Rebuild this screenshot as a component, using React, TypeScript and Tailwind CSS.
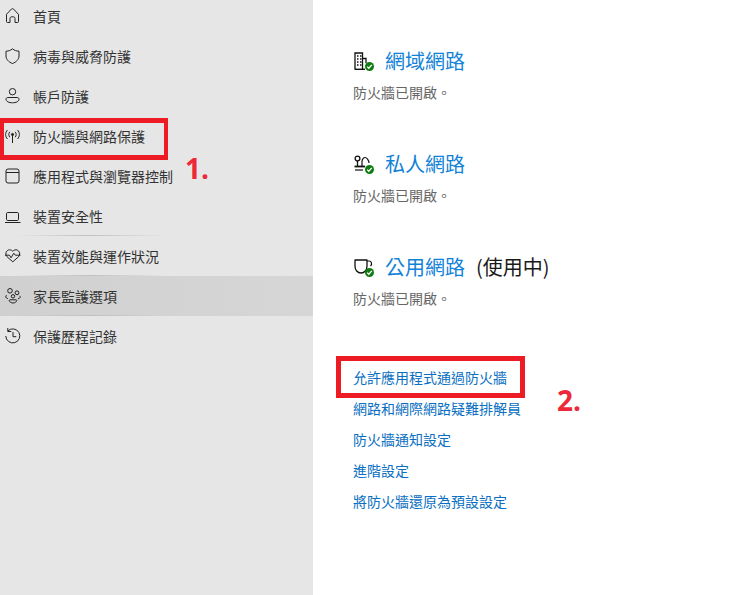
import type { ReactNode } from "react";

const font = "font-['Noto_Sans_CJK_TC','Noto_Sans_CJK_SC',sans-serif]";

function Icon({ children }: { children: ReactNode }) {
  return (
    <svg width="16" height="16" viewBox="0 0 16 16" fill="none" stroke="#222" strokeWidth="1" className="shrink-0">
      {children}
    </svg>
  );
}

const navItems: { label: string; icon: ReactNode; active?: boolean; mark?: boolean; glow?: boolean }[] = [
  {
    label: "首頁",
    icon: <path d="M1.500 6.300 6.500 1C7 .5 8 .5 8.500 1L13.500 6.300V13.500C13.500 14.200 13.200 14.500 12.500 14.500H10V10.500C10 9.500 9.300 8.800 8.500 8.800H6.500C5.700 8.800 5 9.500 5 10.500V14.500H2.500C1.800 14.500 1.500 14.200 1.500 13.500Z" strokeLinejoin="round" />,
  },
  {
    label: "病毒與威脅防護",
    icon: <path d="M7.500 .8C5.500 2.500 3.500 3.100 1 3.200V8C1 11.200 3.500 14 7.500 15.500 11.500 14 14 11.200 14 8V3.200C11.500 3.100 9.500 2.500 7.500 .8Z" />,
  },
  {
    label: "帳戶防護",
    icon: (
      <>
        <circle cx="7.500" cy="3.700" r="3.200" />
        <path d="M2.800 9.500H12.200C13.300 9.500 14 10.200 14 11.200 14 13.500 11 14.800 7.500 14.800 4 14.800 1 13.500 1 11.200 1 10.200 1.700 9.500 2.800 9.500Z" />
      </>
    ),
  },
  {
    label: "防火牆與網路保護",
    mark: true,
    icon: (
      <>
        <circle cx="7.500" cy="6.500" r="1.100" fill="#222" />
        <path d="M7.500 7V15" />
        <path d="M4.800 3.800C3.500 5.300 3.500 7.700 4.800 9.200M10.200 3.800C11.500 5.300 11.500 7.700 10.200 9.200" />
        <path d="M2.500 2C0 4.500 0 8.500 2.500 11M12.500 2C15 4.500 15 8.500 12.500 11" />
      </>
    ),
  },
  {
    label: "應用程式與瀏覽器控制",
    icon: (
      <>
        <rect x="1" y="1" width="13" height="14" rx="2" />
        <path d="M1 4.500H14" />
      </>
    ),
  },
  {
    label: "裝置安全性",
    glow: true,
    icon: (
      <>
        <rect x="1.500" y="4.500" width="12" height="8" rx="1.200" />
        <path d="M0 14.500H15.500" />
      </>
    ),
  },
  {
    label: "裝置效能與運作狀況",
    glow: true,
    icon: (
      <>
        <path d="M1.800 8.500C-.5 5 2 1.800 4.500 1.800 6 1.800 7 2.500 7.800 3.300 8.500 2.500 9.500 1.800 11 1.800 13.500 1.800 16 5 13.800 8.500L7.800 13.800Z" />
        <path d="M0 7.200H4.500L6 9.800 8.800 5.200 10.300 7.200H15.500" />
      </>
    ),
  },
  {
    label: "家長監護選項",
    active: true,
    glow: true,
    icon: (
      <>
        <circle cx="5" cy="2.800" r="2.300" />
        <circle cx="12" cy="4.800" r="1.900" />
        <circle cx="8" cy="8.300" r="1.700" />
        <path d="M1.500 7.200C.2 8.200 .5 10 2.800 10.700" />
        <path d="M14.500 7.800C15.800 8.800 15.400 10.300 13 10.800" />
        <path d="M5 11.800H11C11.800 11.800 12 12.600 11.500 13.300 10.600 14.500 9.300 15 8 15 6.700 15 5.400 14.500 4.500 13.300 4 12.600 4.200 11.800 5 11.800Z" />
      </>
    ),
  },
  {
    label: "保護歷程記錄",
    icon: (
      <>
        <path d="M2.800 3A7 7 0 1 1 .8 8" />
        <path d="M2.800 0V3.500H6.300" />
        <path d="M8 4V8.700H11.300" />
      </>
    ),
  },
];

// green status badge that sits on the network icons
function Check() {
  return (
    <svg width="9" height="9" viewBox="0 0 9 9" className="absolute -right-px bottom-0">
      <circle cx="4.500" cy="4.500" r="4.500" fill="#107c10" />
      <path d="M2.200 4.600 3.800 6.200 6.800 2.900" fill="none" stroke="#fff" strokeWidth="1.300" />
    </svg>
  );
}

const networks: { title: string; inUse?: boolean; icon: ReactNode }[] = [
  {
    title: "網域網路",
    icon: (
      <>
        <path d="M1 17V1H8.500V17M8.500 6.500H12V11" strokeWidth="1.300" />
        <path d="M.5 17.300H11" strokeWidth="1.400" />
        <path d="M3 4H4.500M6 4H7.500M3 7H4.500M6 7H7.500M3 10H4.500M6 10H7.500M3 13H4.500M6 13H7.500" strokeWidth="1.500" />
      </>
    ),
  },
  {
    title: "私人網路",
    icon: (
      <>
        <circle cx="3.500" cy="3.500" r="2.400" strokeWidth="1.300" />
        <path d="M3.500 6V12" strokeWidth="1.300" />
        <path d="M8 11V6.500C8 4 9.800 2.500 11 2.500 12.500 2.500 15 5 15 8" strokeWidth="1.200" />
        <path d="M.5 11.500H11" strokeWidth="1.800" />
        <path d="M1 15H9" strokeWidth="1.200" />
      </>
    ),
  },
  {
    title: "公用網路",
    inUse: true,
    icon: (
      <>
        <path d="M1 2H13V8C13 12 10.500 15 7 15 3.500 15 1 12 1 8Z" strokeWidth="1.300" strokeLinejoin="round" />
        <path d="M13 3H15C17.500 3 18.500 6 16.500 8" strokeWidth="1.200" />
      </>
    ),
  },
];

const links = ["允許應用程式通過防火牆", "網路和網際網路疑難排解員", "防火牆通知設定", "進階設定", "將防火牆還原為預設設定"];

function Sidebar() {
  return (
    <aside className="w-[313px] shrink-0 bg-[#e6e6e6] -mt-[4px]">
      {navItems.map((item) => (
        <div
          key={item.label}
          className={`relative flex h-10 items-center gap-[12px] pl-[5px] text-[14px] text-[#333] ${item.active ? "bg-gradient-to-r from-[#d0d0d0] to-[#d6d6d6]" : ""}`}
        >
          <Icon>{item.icon}</Icon>
          <span>{item.label}</span>
          {item.glow && <div className="absolute bottom-0 left-[15px] h-px w-[150px] bg-gradient-to-r from-transparent via-[#c0c0c0] to-transparent" />}
          {item.mark && <div className="absolute left-0 top-[2px] h-[42px] w-[168px] border-x-4 border-y-[5px] border-[#ed1c24]" />}
        </div>
      ))}
    </aside>
  );
}

export default function App() {
  return (
    <div className={`relative flex h-[595px] w-[745px] overflow-hidden bg-white ${font}`}>
      <div className="flex w-[313px] shrink-0 flex-col bg-[#e6e6e6]">
        <Sidebar />
      </div>
      <main className="flex-1 pl-10 pt-[46px]">
        <div className="flex flex-col gap-[47px]">
          {networks.map((n) => (
            <section key={n.title}>
              <div className="flex h-[30px] items-center">
                <span className="relative ml-px h-[19px] w-[19px]">
                  <svg width="19" height="19" viewBox="0 0 19 19" fill="none" stroke="#111">
                    {n.icon}
                  </svg>
                  <Check />
                </span>
                <span className="ml-[12px] text-[20px] text-[#1282d8]">{n.title}</span>
                {n.inUse && <span className="ml-[11px] text-[20px] text-[#1a1a1a]">(使用中)</span>}
              </div>
              <p className="mt-[6px] text-[14px] leading-[20px] text-[#666]">防火牆已開啟。</p>
            </section>
          ))}
        </div>
        <ul className="mt-[54px]">
          {links.map((label, i) => (
            <li key={label} className="relative flex h-[31px] items-center text-[14px] text-[#0a6fc2]">
              {label}
              {i === 0 && <div className="absolute -left-[17px] top-[-6px] h-[42px] w-[189px] border-[5px] border-[#ed1c24]" />}
            </li>
          ))}
        </ul>
      </main>
      <span className="absolute left-[185px] top-[149px] font-['Open_Sans',sans-serif] text-[28px] font-bold leading-[38px] text-[#ed2939]">1.</span>
      <span className="absolute left-[557px] top-[381px] font-['Open_Sans',sans-serif] text-[28px] font-bold leading-[38px] text-[#ed2939]">2.</span>
    </div>
  );
}
